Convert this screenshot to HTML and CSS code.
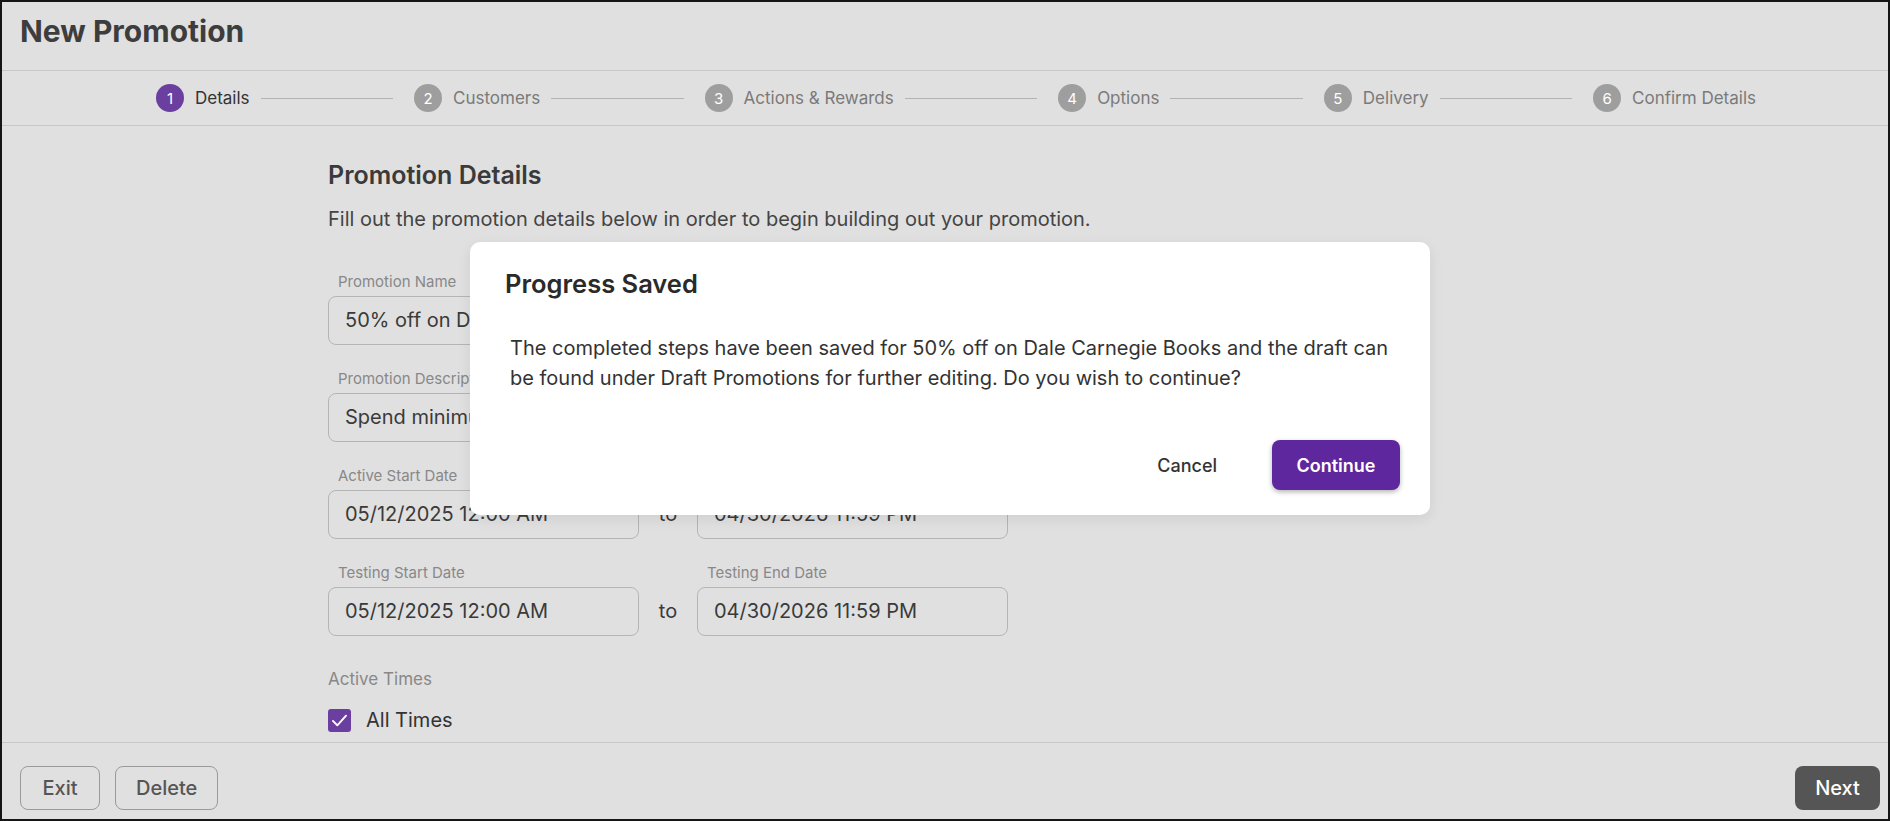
FILE: index.html
```html
<!DOCTYPE html>
<html lang="en">
<head>
    <meta charset="UTF-8">
    <meta name="viewport" content="width=device-width, initial-scale=1.0">
    <title>New Promotion</title>
    <link rel="stylesheet" href="styles.css">
</head>
<body>
    <div class="screen">
        <header class="topbar">
            <h1>New Promotion</h1>
        </header>

        <nav class="stepper">
            <div class="step active"><span class="step-num">1</span><span class="step-label">Details</span></div>
            <div class="connector"></div>
            <div class="step"><span class="step-num">2</span><span class="step-label">Customers</span></div>
            <div class="connector"></div>
            <div class="step"><span class="step-num">3</span><span class="step-label">Actions &amp; Rewards</span></div>
            <div class="connector"></div>
            <div class="step"><span class="step-num">4</span><span class="step-label">Options</span></div>
            <div class="connector"></div>
            <div class="step"><span class="step-num">5</span><span class="step-label">Delivery</span></div>
            <div class="connector"></div>
            <div class="step"><span class="step-num">6</span><span class="step-label">Confirm Details</span></div>
        </nav>

        <main class="content">
            <section class="form">
                <h2>Promotion Details</h2>
                <p class="intro">Fill out the promotion details below in order to begin building out your promotion.</p>

                <div class="field">
                    <label>Promotion Name</label>
                    <div class="input">50% off on Dale Carnegie Books</div>
                </div>

                <div class="field">
                    <label>Promotion Description</label>
                    <div class="input">Spend minimum $50 and get 50% off on Dale Carnegie Books</div>
                </div>

                <div class="date-row">
                    <div class="field date">
                        <label>Active Start Date</label>
                        <div class="input">05/12/2025 12:00 AM</div>
                    </div>
                    <span class="to">to</span>
                    <div class="field date">
                        <label>Active End Date</label>
                        <div class="input">04/30/2026 11:59 PM</div>
                    </div>
                </div>

                <div class="date-row">
                    <div class="field date">
                        <label>Testing Start Date</label>
                        <div class="input">05/12/2025 12:00 AM</div>
                    </div>
                    <span class="to">to</span>
                    <div class="field date">
                        <label>Testing End Date</label>
                        <div class="input">04/30/2026 11:59 PM</div>
                    </div>
                </div>

                <div class="group-label">Active Times</div>
                <div class="check-row">
                    <span class="checkbox">
                        <svg viewBox="0 0 24 24" width="21" height="21"><path d="M4.5 12.5l5 5L19.5 6.5" fill="none" stroke="#fff" stroke-width="2.2" stroke-linecap="round" stroke-linejoin="round"/></svg>
                    </span>
                    <span>All Times</span>
                </div>
            </section>
        </main>

        <footer class="actions">
            <button class="btn outline exit">Exit</button>
            <button class="btn outline">Delete</button>
            <button class="btn dark next">Next</button>
        </footer>

        <div class="backdrop">
            <div class="dialog">
                <h3>Progress Saved</h3>
                <p>The completed steps have been saved for 50% off on Dale Carnegie Books and the draft can be found under Draft Promotions for further editing. Do you wish to continue?</p>
                <div class="dialog-actions">
                    <button class="text-btn">Cancel</button>
                    <button class="primary-btn">Continue</button>
                </div>
            </div>
        </div>
    </div>
</body>
</html>
```

FILE: styles.css
```css
body {
    margin: 0;
    font-family: Inter, "Noto Sans", sans-serif;
    background: #e0e0e0;
    color: #3a3a3a;
}
.screen {
    position: relative;
    box-sizing: border-box;
    height: 821px;
    border: 2px solid #151515;
    display: flex;
    flex-direction: column;
    overflow: hidden;
    background: #e0e0e0;
}
.topbar {
    box-sizing: border-box;
    height: 69px;
    padding: 11px 18px 0;
    border-bottom: 1px solid #c7c7c7;
}
.topbar h1 {
    margin: 0;
    font-size: 30px;
    line-height: 36px;
    font-weight: 700;
    color: #3d3d3d;
}
.stepper {
    box-sizing: border-box;
    height: 55px;
    display: flex;
    align-items: center;
    padding: 0 132px 0 154px;
    border-bottom: 1px solid #c7c7c7;
}
.step {
    display: flex;
    align-items: center;
    gap: 11px;
}
.step-num {
    width: 28px;
    height: 28px;
    border-radius: 50%;
    background: #9e9e9e;
    color: #fff;
    font-size: 15px;
    display: flex;
    align-items: center;
    justify-content: center;
}
.step-label {
    font-size: 17px;
    color: #7a7a7a;
}
.step.active .step-num {
    background: #6b3fa0;
}
.step.active .step-label {
    color: #333;
}
.connector {
    flex: 1;
    height: 1px;
    background: #b3b3b3;
    margin: 0 21px 0 11px;
}
.content {
    flex: 1;
    overflow: hidden;
}
.form {
    padding: 34px 0 0 326px;
}
.form h2 {
    margin: 0;
    font-size: 25px;
    line-height: 30px;
    font-weight: 600;
    color: #3a3a3a;
}
.intro {
    margin: 14px 0 38px;
    font-size: 20px;
    line-height: 30px;
    color: #444;
    white-space: nowrap;
}
.field {
    width: 680px;
    margin-bottom: 24px;
}
.field label {
    display: block;
    padding-left: 10px;
    font-size: 15px;
    line-height: 20px;
    color: #888;
    margin-bottom: 4px;
}
.input {
    box-sizing: border-box;
    height: 49px;
    border: 1px solid #b5b5b5;
    border-radius: 8px;
    padding: 0 16px;
    font-size: 20px;
    line-height: 47px;
    color: #3a3a3a;
    white-space: nowrap;
    overflow: hidden;
}
.date-row {
    display: flex;
    align-items: flex-end;
}
.date-row .field {
    width: 311px;
}
.to {
    width: 58px;
    text-align: center;
    font-size: 20px;
    line-height: 49px;
    margin-bottom: 24px;
    color: #3a3a3a;
}
.group-label {
    margin-top: 7px;
    font-size: 17px;
    line-height: 24px;
    color: #888;
}
.check-row {
    display: flex;
    align-items: center;
    gap: 15px;
    margin-top: 17px;
    font-size: 20px;
    color: #333;
}
.checkbox {
    width: 23px;
    height: 23px;
    border-radius: 3px;
    background: #6b3fa0;
    display: flex;
    align-items: center;
    justify-content: center;
}
.actions {
    box-sizing: border-box;
    height: 77px;
    border-top: 1px solid #c7c7c7;
    padding: 23px 8px 8px 18px;
    display: flex;
    gap: 15px;
}
.btn {
    height: 44px;
    padding: 0 20px;
    border-radius: 8px;
    font-family: Inter, sans-serif;
    font-size: 20px;
    font-weight: 500;
    cursor: pointer;
}
.btn.outline {
    background: transparent;
    border: 1px solid #9a9a9a;
    color: #555;
}
.btn.exit {
    min-width: 80px;
}
.btn.dark {
    background: #555;
    border: none;
    color: #fff;
}
.btn.next {
    margin-left: auto;
    min-width: 85px;
}
.backdrop {
    position: absolute;
    inset: 0;
    display: flex;
    justify-content: center;
    align-items: flex-start;
    padding: 240px 0 0 10px;
}
.dialog {
    box-sizing: border-box;
    width: 960px;
    background: #fff;
    border-radius: 10px;
    padding: 26px 30px 25px 35px;
    box-shadow: 0 4px 14px rgba(0, 0, 0, 0.08);
}
.dialog h3 {
    margin: 0;
    font-size: 25.5px;
    line-height: 32px;
    font-weight: 600;
    color: #2a2a2a;
}
.dialog p {
    margin: 33px 0 0;
    padding-left: 5px;
    font-size: 20px;
    line-height: 30px;
    color: #333;
}
.dialog-actions {
    margin-top: 47px;
    display: flex;
    justify-content: flex-end;
    align-items: center;
    gap: 39px;
}
.text-btn {
    height: 50px;
    padding: 0 16px;
    border: none;
    background: transparent;
    font-family: Inter, sans-serif;
    font-size: 18px;
    font-weight: 500;
    color: #333;
}
.primary-btn {
    width: 128px;
    height: 50px;
    border: none;
    border-radius: 8px;
    background: #5f279e;
    color: #fff;
    font-family: Inter, sans-serif;
    font-size: 18px;
    font-weight: 600;
    box-shadow: 0 2px 5px rgba(0, 0, 0, 0.3);
}
```
